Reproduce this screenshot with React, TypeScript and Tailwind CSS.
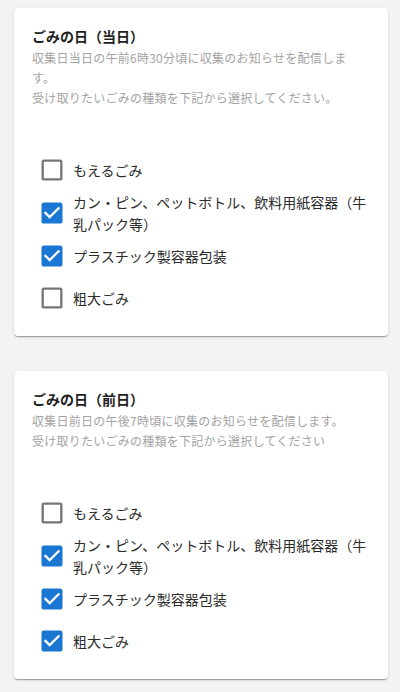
import React, { useState } from 'react'

type Option = { id: string; label: string }

const options: Option[] = [
  { id: 'burnable', label: 'もえるごみ' },
  { id: 'cans', label: 'カン・ピン、ペットボトル、飲料用紙容器（牛乳パック等）' },
  { id: 'plastic', label: 'プラスチック製容器包装' },
  { id: 'bulky', label: '粗大ごみ' },
]

function CheckIcon({ checked }: { checked: boolean }) {
  return (
    <svg viewBox="0 0 24 24" className={checked ? 'w-[28px] h-[28px] shrink-0 fill-[#1976d2]' : 'w-[28px] h-[28px] shrink-0 fill-[#767676]'}>
      {checked ? (
        <path d="M19 3H5c-1.11 0-2 .9-2 2v14c0 1.1.89 2 2 2h14c1.11 0 2-.9 2-2V5c0-1.1-.89-2-2-2zm-9 14l-5-5 1.41-1.41L10 14.17l7.59-7.59L19 8l-9 9z" />
      ) : (
        <path d="M19 5v14H5V5h14m0-2H5c-1.1 0-2 .9-2 2v14c0 1.1.9 2 2 2h14c1.1 0 2-.9 2-2V5c0-1.1-.9-2-2-2z" />
      )}
    </svg>
  )
}

interface NoticeCardProps {
  title: string
  lines: string[]
  initial: Record<string, boolean>
}

function NoticeCard({ title, lines, initial }: NoticeCardProps) {
  const [checked, setChecked] = useState(initial)

  return (
    <div className="bg-white rounded shadow-[0_2px_1px_-1px_rgba(0,0,0,0.2),0_1px_1px_0_rgba(0,0,0,0.14),0_1px_3px_0_rgba(0,0,0,0.12)] pt-[18px] pb-[17px] px-[18px]">
      {/* Header */}
      <h2 className="text-[14px] leading-[20px] font-bold text-[#1f1f1f] mb-[2px]">{title}</h2>
      <div className="w-[322px] text-[12px] leading-[20px] tracking-[0.25px] text-[#a3a3a3]">
        {lines.map(l => (
          <p key={l}>{l}</p>
        ))}
      </div>

      {/* Options */}
      <div className="mt-[41px] pl-[6px]">
        {options.map(o => (
          <label key={o.id} className="flex items-center gap-[7px] min-h-[42px] cursor-pointer">
            <input
              type="checkbox"
              className="sr-only"
              checked={!!checked[o.id]}
              onChange={() => setChecked(c => ({ ...c, [o.id]: !c[o.id] }))}
            />
            <CheckIcon checked={!!checked[o.id]} />
            <span className="flex-1 text-[14px] leading-[22px] text-[#2b2b2b]">{o.label}</span>
          </label>
        ))}
      </div>
    </div>
  )
}

export default function App() {
  return (
    <div
      className="min-h-screen bg-[#f2f3f5] pt-[8px] pb-[11px] pl-[14px] pr-[12px] flex flex-col gap-[35px]"
      style={{ fontFamily: '"Noto Sans CJK JP", "Noto Sans", sans-serif' }}
    >
      <NoticeCard
        title="ごみの日（当日）"
        lines={['収集日当日の午前6時30分頃に収集のお知らせを配信します。', '受け取りたいごみの種類を下記から選択してください。']}
        initial={{ cans: true, plastic: true }}
      />
      <NoticeCard
        title="ごみの日（前日）"
        lines={['収集日前日の午後7時頃に収集のお知らせを配信します。', '受け取りたいごみの種類を下記から選択してください']}
        initial={{ cans: true, plastic: true, bulky: true }}
      />
    </div>
  )
}
